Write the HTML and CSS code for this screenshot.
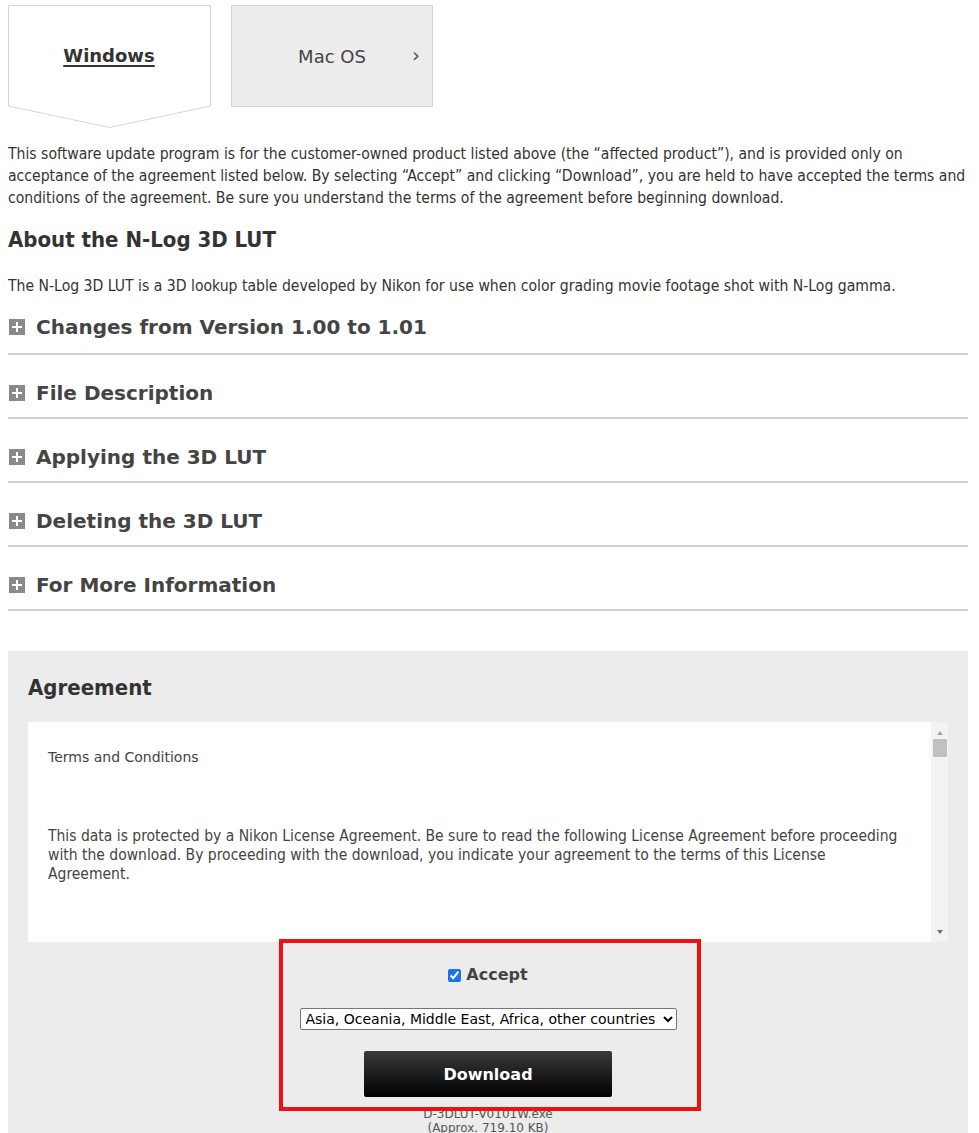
FILE: index.html
```html
<!DOCTYPE html>
<html lang="en">
<head>
<meta charset="utf-8">
<title>N-Log 3D LUT</title>
<link rel="stylesheet" href="styles.css">
</head>
<body>
<div class="page">
  <div class="tabs">
    <a class="tab tab-active" href="#">
      <svg class="tab-shape" width="204" height="124" viewBox="0 0 204 124" aria-hidden="true">
        <polygon points="0.5,0.5 202.5,0.5 202.5,101 101.5,122.5 0.5,101" fill="#fff" stroke="#d6d6d6" stroke-width="1"/>
      </svg>
      <span class="tab-label">Windows</span>
    </a>
    <a class="tab tab-other" href="#">
      <span class="tab-label">Mac OS</span>
      <span class="chev">&#8250;</span>
    </a>
  </div>

  <p class="intro">This software update program is for the customer-owned product listed above (the “affected product”), and is provided only on acceptance of the agreement listed below. By selecting “Accept” and clicking “Download”, you are held to have accepted the terms and conditions of the agreement. Be sure you understand the terms of the agreement before beginning download.</p>

  <h2 class="about-title">About the N-Log 3D LUT</h2>
  <p class="about-text">The N-Log 3D LUT is a 3D lookup table developed by Nikon for use when color grading movie footage shot with N-Log gamma.</p>

  <div class="accordion">
    <div class="acc-item"><span class="plus"></span><span class="acc-title">Changes from Version 1.00 to 1.01</span></div>
    <div class="acc-item"><span class="plus"></span><span class="acc-title">File Description</span></div>
    <div class="acc-item"><span class="plus"></span><span class="acc-title">Applying the 3D LUT</span></div>
    <div class="acc-item"><span class="plus"></span><span class="acc-title">Deleting the 3D LUT</span></div>
    <div class="acc-item"><span class="plus"></span><span class="acc-title">For More Information</span></div>
  </div>

  <section class="agreement">
    <h2 class="agr-title">Agreement</h2>
    <div class="agr-scroll">
      <div class="agr-content">
        <p class="terms-head">Terms and Conditions</p>
        <p class="terms-text">This data is protected by a Nikon License Agreement. Be sure to read the following License Agreement before proceeding with the download. By proceeding with the download, you indicate your agreement to the terms of this License Agreement.</p>
      </div>
      <div class="scrollbar" aria-hidden="true">
        <span class="sb-up"></span>
        <span class="sb-thumb"></span>
        <span class="sb-space"></span>
        <span class="sb-down"></span>
      </div>
    </div>
    <div class="dl-area">
      <label class="accept"><input type="checkbox" checked> Accept</label>
      <select class="region">
        <option>Asia, Oceania, Middle East, Africa, other countries</option>
      </select>
      <button class="dl-btn" type="button">Download</button>
      <div class="file-name">D-3DLUT-V0101W.exe</div>
      <div class="file-size">(Approx. 719.10 KB)</div>
      <div class="highlight"></div>
    </div>
  </section>
</div>
</body>
</html>
```

FILE: styles.css
```css
html, body {
  margin: 0;
  padding: 0;
  background: #fff;
}

body {
  font-family: "DejaVu Sans", Verdana, sans-serif;
  color: #333;
}

.page {
  width: 960px;
  margin-left: 8px;
  padding-top: 5px;
}

/* Tabs */
.tabs {
  display: flex;
  gap: 21px;
  height: 123px;
}

.tab {
  position: relative;
  width: 202px;
  height: 101px;
  display: flex;
  align-items: center;
  justify-content: center;
  text-decoration: none;
  color: #444;
  box-sizing: border-box;
}

.tab-shape {
  position: absolute;
  left: 0;
  top: 0;
}

.tab-active .tab-label {
  position: relative;
  font-weight: bold;
  font-size: 18px;
  color: #333;
  text-decoration: underline;
  text-underline-offset: 3px;
  text-decoration-thickness: 2px;
}

.tab-other {
  height: 102px;
  background: #ececec;
  border: 1px solid #d6d6d6;
}

.tab-other .tab-label {
  font-size: 18px;
  color: #444;
}

.chev {
  position: absolute;
  right: 12px;
  top: 50%;
  transform: translateY(-55%);
  font-size: 20px;
  color: #555;
}

/* Intro */
.intro {
  margin: 15px 0 0;
  font-family: "DejaVu Sans Condensed", "DejaVu Sans", sans-serif;
  font-stretch: condensed;
  font-size: 15.6px;
  line-height: 22px;
  color: #333;
}

.about-title {
  margin: 17px 0 0;
  font-family: "DejaVu Sans Condensed", "DejaVu Sans", sans-serif;
  font-stretch: condensed;
  font-weight: bold;
  font-size: 22px;
  line-height: 28px;
  color: #333;
}

.about-text {
  margin: 21px 0 0;
  font-family: "DejaVu Sans Condensed", "DejaVu Sans", sans-serif;
  font-stretch: condensed;
  font-size: 15.6px;
  line-height: 22px;
}

/* Accordion */
.acc-item {
  display: flex;
  align-items: center;
  gap: 11px;
  height: 24px;
  padding: 26px 0 12px;
  border-bottom: 2px solid #d2d2d2;
}

.acc-item:first-child {
  padding: 18px 0 14px;
}

.plus {
  position: relative;
  width: 16px;
  height: 16px;
  background: #8a8a8a;
  flex: none;
  margin-left: 1px;
}

.plus::before,
.plus::after {
  content: "";
  position: absolute;
  background: #fff;
}

.plus::before {
  left: 3px;
  top: 7px;
  width: 10px;
  height: 2px;
}

.plus::after {
  left: 7px;
  top: 3px;
  width: 2px;
  height: 10px;
}

.acc-title {
  font-weight: bold;
  font-size: 20px;
  line-height: 24px;
  color: #444;
}

/* Agreement */
.agreement {
  margin-top: 40px;
  background: #ececec;
  padding: 20px 20px 0;
}

.agr-title {
  margin: 0;
  font-family: "DejaVu Sans Condensed", "DejaVu Sans", sans-serif;
  font-stretch: condensed;
  font-weight: bold;
  font-size: 22px;
  line-height: 34px;
  color: #333;
}

.agr-scroll {
  margin-top: 17px;
  height: 220px;
  background: #fff;
  display: flex;
  overflow: hidden;
}

.agr-content {
  flex: 1;
  padding: 25px 28px 0 20px;
  overflow: hidden;
}

.scrollbar {
  width: 17px;
  flex: none;
  background: #f3f3f3;
  display: flex;
  flex-direction: column;
  align-items: center;
}

.sb-up,
.sb-down {
  flex: none;
  width: 0;
  height: 0;
  border-left: 3.5px solid transparent;
  border-right: 3.5px solid transparent;
}

.sb-up {
  margin-top: 9px;
  border-bottom: 4px solid #a3a3a3;
}

.sb-down {
  margin-bottom: 8px;
  border-top: 4px solid #6e6e6e;
}

.sb-thumb {
  flex: none;
  margin-top: 4px;
  width: 14px;
  height: 18px;
  background: #c1c1c1;
}

.sb-space {
  flex: 1;
}

.terms-head {
  margin: 0;
  font-size: 14px;
  line-height: 20px;
  color: #444;
}

.terms-text {
  margin: 60px 0 0;
  font-family: "DejaVu Sans Condensed", "DejaVu Sans", sans-serif;
  font-stretch: condensed;
  font-size: 15.5px;
  line-height: 19px;
  color: #444;
}

/* Download area */
.dl-area {
  position: relative;
  display: flex;
  flex-direction: column;
  align-items: center;
  padding-top: 22px;
  padding-bottom: 6px;
}

.accept {
  display: flex;
  align-items: center;
  gap: 5px;
  font-weight: bold;
  font-size: 16px;
  color: #444;
  line-height: 22px;
}

.accept input {
  margin: 0;
  width: 13px;
  height: 13px;
  accent-color: #1a73e8;
}

.region {
  margin-top: 22px;
  width: 377px;
  height: 22px;
  font-family: "DejaVu Sans", sans-serif;
  font-size: 14px;
  color: #000;
  background: #fff;
  border: 1px solid #767676;
  border-radius: 2px;
  padding: 0 1px;
}

.dl-btn {
  margin-top: 21px;
  width: 248px;
  height: 46px;
  border: none;
  border-radius: 2px;
  background: linear-gradient(#3a3a3a, #000);
  color: #fff;
  font-family: "DejaVu Sans", sans-serif;
  font-weight: bold;
  font-size: 16px;
  cursor: pointer;
}

.file-name,
.file-size {
  font-size: 12px;
  line-height: 14px;
  color: #555;
}

.file-name {
  margin-top: 10px;
}

.highlight {
  position: absolute;
  left: 251px;
  top: -3px;
  width: 414px;
  height: 164px;
  border: 4px solid #ee1111;
  pointer-events: none;
}
```
